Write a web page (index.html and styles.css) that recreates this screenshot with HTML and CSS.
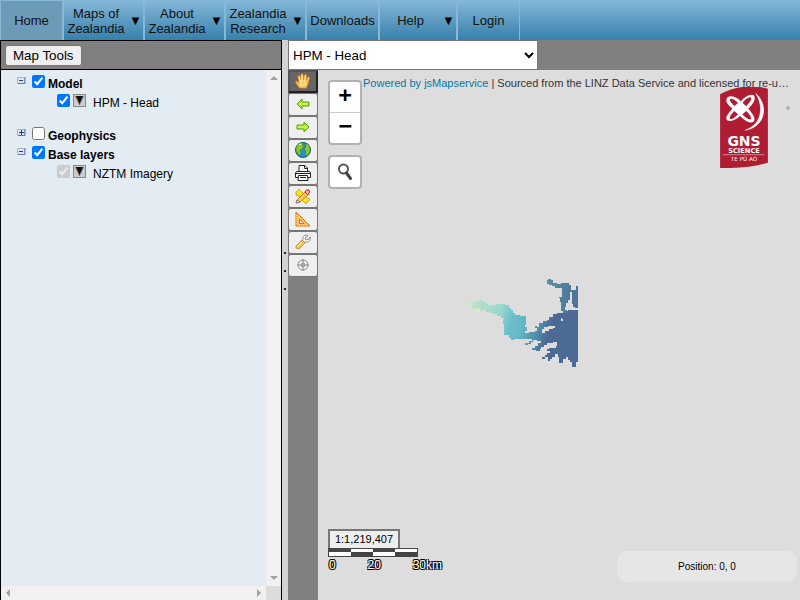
FILE: index.html
```html
<!DOCTYPE html>
<html lang="en">
<head>
<meta charset="utf-8">
<title>Groundwater map</title>
<link rel="stylesheet" href="styles.css">
</head>
<body>
<nav class="nav">
  <a class="item home" href="#"><span>Home</span></a>
  <a class="item menu" href="#"><span>Maps of Zealandia</span><i>▼</i></a>
  <a class="item menu" href="#"><span>About Zealandia</span><i>▼</i></a>
  <a class="item menu" href="#"><span>Zealandia Research</span><i>▼</i></a>
  <a class="item downloads" href="#"><span>Downloads</span></a>
  <a class="item help" href="#"><span>Help</span><i>▼</i></a>
  <a class="item login" href="#"><span>Login</span></a>
</nav>
<div class="workspace">
  <aside class="panel">
    <div class="panel-head"><button class="tools-button" type="button">Map Tools</button></div>
    <div class="scroller">
      <div class="tree">
        <div class="row">
          <svg class="toggle" viewBox="0 0 9 9"><path d="M.5 1.500h7v6h-7z" fill="#dde6f3" stroke="#a5b5cf"/><path d="M1 7.500h7V1" fill="none" stroke="#647aa3"/><path d="M2 4.500h4" stroke="#27406f"/></svg>
          <input type="checkbox" id="model" checked><label class="group" for="model">Model</label>
        </div>
        <div class="row leaf last">
          <input type="checkbox" id="head" checked>
          <button class="drop" type="button" aria-label="HPM - Head options"><svg viewBox="0 0 11 11"><path d="M1 1h9L5.500 10z" fill="#111"/><path d="M1.500 1l3.500 8" stroke="#bd8a52"/><path d="M9.500 1L6 9" stroke="#6a9cc8"/><path d="M3 1h5L5.500 8z" fill="#111"/></svg></button>
          <label for="head">HPM - Head</label>
        </div>
        <div class="row">
          <svg class="toggle" viewBox="0 0 9 9"><path d="M.5 1.500h7v6h-7z" fill="#dde6f3" stroke="#a5b5cf"/><path d="M1 7.500h7V1" fill="none" stroke="#647aa3"/><path d="M2 4.500h5M4.500 2v5" stroke="#27406f"/></svg>
          <input type="checkbox" id="geo"><label class="group" for="geo">Geophysics</label>
        </div>
        <div class="row">
          <svg class="toggle" viewBox="0 0 9 9"><path d="M.5 1.500h7v6h-7z" fill="#dde6f3" stroke="#a5b5cf"/><path d="M1 7.500h7V1" fill="none" stroke="#647aa3"/><path d="M2 4.500h4" stroke="#27406f"/></svg>
          <input type="checkbox" id="base" checked><label class="group" for="base">Base layers</label>
        </div>
        <div class="row leaf">
          <input type="checkbox" id="nztm" checked disabled>
          <button class="drop" type="button" aria-label="NZTM Imagery options"><svg viewBox="0 0 11 11"><path d="M1 1h9L5.500 10z" fill="#111"/><path d="M1.500 1l3.500 8" stroke="#bd8a52"/><path d="M9.500 1L6 9" stroke="#6a9cc8"/><path d="M3 1h5L5.500 8z" fill="#111"/></svg></button>
          <label for="nztm">NZTM Imagery</label>
        </div>
      </div>
      <div class="bar vertical">
        <svg viewBox="0 0 8 4"><path d="M0 4L4 0l4 4z"/></svg>
        <svg viewBox="0 0 8 4"><path d="M0 0l4 4 4-4z"/></svg>
      </div>
      <div class="bar horizontal">
        <svg viewBox="0 0 4 8"><path d="M4 0L0 4l4 4z"/></svg>
        <svg viewBox="0 0 4 8"><path d="M0 0l4 4-4 4z"/></svg>
      </div>
      <div class="corner"></div>
    </div>
  </aside>
  <div class="splitter"><span>.</span><span>.</span><span>.</span></div>
  <main class="viewer">
    <div class="select-bar">
      <select aria-label="Active layer"><option>HPM - Head</option></select>
    </div>
    <div class="stage">
      <div class="toolbar">
        <button class="tool active" type="button" aria-label="Pan">
          <svg viewBox="0 0 16 16"><path d="M4.500 15L1 10C0 8 1.500 7.500 3 9L4 10 3 4C2.700 2.300 4.600 2 5 3.600L6 7V1.800C6 .4 8 .4 8 1.800L8.500 7l1-4.800C9.800.9 11.600 1.200 11.400 2.600L11 7.500l1.700-3C13.400 3.300 15 4 14.500 5.300L12.500 12l-1.300 3z" fill="#fcc95c" stroke="#e68c1c" stroke-width=".8"/><path d="M4.300 4l1.500 6M7 2v7M10.400 3L9.500 9M5 12l6-1" stroke="#fff0bd" fill="none"/></svg>
        </button>
        <button class="tool" type="button" aria-label="Previous view">
          <svg viewBox="0 0 16 16"><path d="M2 8l5-5v3h7v4H7v3z" fill="#b9ee30" stroke="#5b9e12"/><path d="M4 8h9" stroke="#dcff6b"/></svg>
        </button>
        <button class="tool" type="button" aria-label="Next view">
          <svg viewBox="0 0 16 16"><path d="M14 8L9 3v3H2v4h7v3z" fill="#b9ee30" stroke="#5b9e12"/><path d="M3 8h9" stroke="#dcff6b"/></svg>
        </button>
        <button class="tool" type="button" aria-label="Full extent">
          <svg viewBox="0 0 16 16"><circle cx="8" cy="8" r="7.500" fill="#2390cf" stroke="#135985"/><path d="M1 6C2 2 5 1 8 1L7 3l2 1-2 3-2 1 1 3-1 3-4-5zM10 2l3 0 2 4v4l-3 4-2-2 1-3-2-2 2-2z" fill="#8dc72c" stroke="#347d2d" stroke-width=".6"/><path d="M4 2.500l3-.5" stroke="#f4f4b0"/></svg>
        </button>
        <button class="tool" type="button" aria-label="Print">
          <svg viewBox="0 0 16 16" fill="#fafafa" stroke="#222"><path d="M4 7V.5h6L12.500 3v4"/><path d="M9.500.5V3.500h3" fill="none"/><path d="M1.500 6.500h13L15.500 8v4.500H.5V8z"/><path d="M3.500 10.500h9l.5 5H3z"/><path d="M1 8.500h14M5 12.500h6" fill="none"/></svg>
        </button>
        <button class="tool" type="button" aria-label="Draw">
          <svg viewBox="0 0 16 16"><path d="M1 4l2-1 1-2 3 3 5 6 3 1-1 2-2 1-1 2-3-3-4-5-3-1z" fill="#ffe51e" stroke="#c69a00" stroke-width=".8"/><path d="M2 12l8-8 3 3-8 7-4 1z" fill="#f9c45b" stroke="#ba7b20" stroke-width=".8"/><path d="M10 4c1-3 5-3 4.500 0 0 1-1 2-1.500 3z" fill="#f5b0ab" stroke="#cf1b20"/><path d="M2 12l3 2-4 1z" fill="#eee" stroke="#666" stroke-width=".7"/></svg>
        </button>
        <button class="tool" type="button" aria-label="Measure">
          <svg viewBox="0 0 16 16"><path d="M1 1l14 14H1zM4.500 8v4.500H9z" fill="#f9bd5b" fill-rule="evenodd" stroke="#c9791b"/><path d="M2 4v10h11" fill="none" stroke="#ffe1a0" stroke-dasharray="1 1"/></svg>
        </button>
        <button class="tool" type="button" aria-label="Settings">
          <svg viewBox="0 0 16 16"><path d="M8 6C7 3 9 1 12 1l1 1-3 2 1 2 3-1 1-2c1 4-2 6-5 5L8 9 7 8z" fill="#f3f3f3" stroke="#777" stroke-width=".8"/><path d="M7 6l3 3-6 6-3-1V12z" fill="#fbc45b" stroke="#c68620" stroke-width=".8"/><path d="M7 8l-5 5" stroke="#ffeaad"/></svg>
        </button>
        <button class="tool" type="button" aria-label="Locate">
          <svg viewBox="0 0 16 16" fill="none" stroke="#8d8d8d"><circle cx="8" cy="8" r="5"/><circle cx="8" cy="8" r="2" stroke-width=".8"/><path d="M8 2v12M2 8h12"/></svg>
        </button>
      </div>
      <div class="map">
        <svg class="raster" viewBox="0 0 390 315" shape-rendering="crispEdges">
          <defs>
            <linearGradient id="depth" gradientUnits="userSpaceOnUse" x1="10" y1="90" x2="270" y2="180">
              <stop offset="0" stop-color="#d3edcf"/><stop offset=".2" stop-color="#b0ddcd"/><stop offset=".42" stop-color="#98d8cb"/><stop offset=".56" stop-color="#6dc0cb"/><stop offset=".7" stop-color="#64b8c4"/><stop offset=".87" stop-color="#528dad"/><stop offset="1" stop-color="#4b6b94"/>
            </linearGradient>
            <linearGradient id="north" x1="0" x2="1"><stop offset="0" stop-color="#568fa9"/><stop offset="1" stop-color="#4d7198"/></linearGradient>
          </defs>
          <path fill="url(#depth)" d="M10 102H20V99H34V92H42V90H45V94H60V91H70V95H78V103H86V109H94V106H108V103H134V106H147V113H153V120H160V128H166V134H180V138H197V165H194V172H200V182H194V190H206V186H226V182H232V175H226V167H232V172H238V160H250V154H262V150H268V142H280V132H290V129H308V124H325V121H354V277H348V291H336V277H330V271H324V262H318V268H308V279H298V262H294V253H285V260H276V266H270V272H264V262H256V268H247V262H254V256H261V249H270V243H262V237H268V233H288V228H292V215H278V219H262V226H252V232H244V236H240V242H228V239H217V234H226V228H235V219H244V213H230V210H220V216H212V221H204V224H195V219H206V213H216V207H162V209H153V205H147V194H132V163H130V148H132V144H123V137H112V132H100V129H91V125H78V120H66V126H39V122H48V113H36V108H30V106H26V113H22V108H10z"/>
          <path fill="#ddd" d="M246 184V178H252V172H264V167H285V173H278V178H266V184H254V190H246zM303 144h3v3h3v6h-6z"/>
          <path fill="url(#north)" d="M261 30H264V27H272V31H278V40H290V43H302V40H326V46H334V60H347V48H354V115H346V110H340V102H336V65H330V90H324V100H318V110H314V121H320V130H308V124H303V97H300V85H297V82H306V54H285V49H275V46H267V41H261z"/>
          <path fill="#d8edc0" d="M39 120h12v-6h9v6h3v5H39zM18 102h12v3H18z"/>
        </svg>
        <div class="control zoom">
          <button type="button" aria-label="Zoom in">+</button>
          <button type="button" aria-label="Zoom out">−</button>
        </div>
        <div class="control search">
          <button type="button" aria-label="Search"><svg viewBox="0 0 16 18"><circle cx="6.500" cy="6" r="4.500" fill="none" stroke="#555" stroke-width="2"/><path d="M9.500 10l4 5.500" stroke="#444" stroke-width="3" stroke-linecap="round"/></svg></button>
        </div>
        <div class="attribution"><a href="#">Powered by jsMapservice</a> | Sourced from the LINZ Data Service and licensed for re-u…</div>
        <svg class="logo" viewBox="60 50 144 244">
          <path d="M60 72Q125 36 204 55V278Q145 296 60 294z" fill="#b01c32"/>
          <path d="M79 88C83 66 120 84 122 94C135 76 162 66 164 80C167 94 151 108 145 115C158 131 169 146 161 154C148 164 126 143 120 137C105 151 86 157 80 149C74 139 91 123 97 115C86 106 77 97 79 88zM89 88C89 94 98 102 103 107L114 98C105 88 92 82 89 88zM128 98L139 108C147 99 157 88 153 82C148 78 135 88 128 98zM103 122C93 132 85 142 91 146C97 149 108 138 114 132zM139 122L127 132C135 141 147 150 152 147C157 142 147 130 139 122z" fill="#fff" fill-rule="evenodd"/>
          <path d="M168 70C205 102 199 170 136 180C184 164 194 112 168 70z" fill="#fff" stroke="#fff" stroke-width="2"/>
          <g fill="#fff" text-anchor="middle"><text class="gns" x="132" y="227">GNS</text><text class="science" x="132" y="248">SCIENCE</text><text class="maori" x="132" y="272">TE PŪ AO</text></g>
          <path d="M69 254h125" stroke="#e8bcc3" stroke-width="2"/>
        </svg>
        <span class="dot"></span>
        <div class="scale">
          <div class="ratio">1:1,219,407</div>
          <div class="ruler"><i></i><i></i><i></i><i></i></div>
          <div class="marks"><span>0</span><span>20</span><span>30km</span></div>
        </div>
        <div class="position">Position: 0, 0</div>
      </div>
    </div>
  </main>
</div>
</body>
</html>
```
FILE: styles.css
```css
* { box-sizing: border-box; }
body {
  margin: 0;
  height: 100vh;
  display: flex;
  flex-direction: column;
  overflow: hidden;
  background: #ddd;
  color: #000;
  font-family: "Liberation Sans", Arial, sans-serif;
  font-size: 12px;
}
svg { display: block; }
button { font-family: inherit; color: #000; }

.nav {
  display: flex;
  flex: 0 0 40px;
  background: linear-gradient(#86b8d8, #3680ab);
}
.item {
  display: flex;
  align-items: center;
  width: 81px;
  border: 1px solid #86b8d8;
  border-width: 1px 1px 0;
  color: #111;
  font-size: 13px;
  line-height: 15px;
  text-align: center;
  text-decoration: none;
}
.item span { flex: 1; }
.item i { width: 15px; font-style: normal; text-align: center; color: #000; }
.home { width: 63px; background: #6b9bb6; }
.downloads { width: 73px; }
.help { width: 78px; }
.login { width: 63px; }

.workspace { display: flex; flex: 1; min-height: 0; }
.panel {
  display: flex;
  flex-direction: column;
  width: 282px;
  border: solid #000;
  border-width: 1px 1px 0;
}
.panel-head {
  display: flex;
  align-items: center;
  height: 29px;
  padding-left: 4px;
  background: #808080;
  border-bottom: 1px solid #000;
}
.tools-button {
  height: 21px;
  padding: 0 7px;
  border: 1px solid #767676;
  border-radius: 3px;
  background: #efefef;
}
.scroller {
  flex: 1;
  display: grid;
  grid-template: 1fr 14px / 1fr 15px;
  background: #e4ecf3;
}
.tree { padding: 5px 0 0 16px; }
.row { display: flex; align-items: flex-start; height: 19px; }
.row input { width: 13px; height: 13px; margin: 0 3px 0 0; }
.row label { padding-top: 1px; line-height: 16px; }
.row .group { font-weight: bold; }
.toggle { width: 9px; height: 9px; margin-right: 6px; margin-top: 1px; }
.leaf { padding-left: 40px; }
.last { height: 33px; }
.drop {
  width: 13px;
  height: 13px;
  margin-right: 7px;
  padding: 0;
  border: 1px solid #888;
  background: #ccc;
}
.drop svg { width: 11px; height: 11px; }
.bar { display: flex; align-items: center; justify-content: space-between; background: #f1f1f1; fill: #a3a3a3; }
.vertical { flex-direction: column; padding: 6px 0; }
.vertical svg { width: 8px; height: 4px; }
.horizontal { padding: 0 5px; }
.horizontal svg { width: 4px; height: 8px; }
.corner { background: #dcdcdc; }

.splitter {
  display: flex;
  flex-direction: column;
  align-items: center;
  justify-content: center;
  width: 6px;
  padding-bottom: 104px;
  background: #d3d3d3;
  font-weight: bold;
  line-height: 18px;
}

.viewer { display: flex; flex: 1; flex-direction: column; min-width: 0; }
.select-bar { display: flex; height: 30px; background: #808080; }
.select-bar select {
  width: 250px;
  height: 30px;
  border: 1px solid #767676;
  border-radius: 0;
  background-color: #fff;
  color: #000;
  font-family: inherit;
}
.stage { display: flex; flex: 1; }
.toolbar { display: flex; flex-direction: column; width: 30px; background: #808080; }
.tool {
  display: flex;
  align-items: center;
  justify-content: center;
  height: 23px;
  padding: 0 0 2px;
  border: 1px solid #767676;
  border-radius: 3px;
  background: #efefef;
}
.tool svg { width: 16px; height: 16px; }
.active { border: 2px solid #333; border-color: #555 #222 #222 #555; border-radius: 0; background: #666; }

.map { position: relative; flex: 1; overflow: hidden; background: #ddd; }
.raster { position: absolute; left: 142px; top: 200px; width: 130px; height: 105px; }
.control {
  position: absolute;
  left: 10px;
  width: 34px;
  border: 2px solid #b1b1b1;
  border-radius: 4px;
  background: #fff;
}
.control button {
  display: flex;
  justify-content: center;
  align-items: center;
  width: 30px;
  height: 30px;
  padding: 0;
  border: 0;
  background: none;
  font: bold 22px/26px "DejaVu Sans Mono", monospace;
}
.zoom { top: 10px; }
.zoom button { padding-bottom: 4px; }
.zoom button:first-child { height: 31px; border-bottom: 1px solid #ccc; }
.search { top: 85px; }
.search svg { width: 16px; height: 18px; }
.attribution {
  position: absolute;
  left: 45px;
  right: 8px;
  top: 5px;
  color: #333;
  font-size: 11px;
  line-height: 16px;
  white-space: nowrap;
}
.attribution a { color: #0078a8; text-decoration: none; }
.logo { position: absolute; right: 32px; top: 17px; width: 48px; height: 81px; }
.gns { font: bold 42px "DejaVu Sans", sans-serif; }
.science { font: bold 20px "DejaVu Sans", sans-serif; }
.maori { font: 17px "DejaVu Sans", sans-serif; }
.dot { position: absolute; right: 10px; top: 36px; width: 4px; height: 4px; border-radius: 50%; background: #b3b3b3; }
.scale { position: absolute; left: 10px; bottom: 26px; width: 114px; }
.ratio {
  width: 72px;
  height: 19px;
  border: 2px solid #777;
  border-bottom: 0;
  background: #eee;
  font-size: 11px;
  line-height: 17px;
  text-align: center;
}
.ruler { display: flex; width: 90px; height: 9px; border: 1px solid #444; }
.ruler i { flex: 1; background: linear-gradient(#444 50%, #fff 50%); }
.ruler i:nth-child(even) { background: linear-gradient(#fff 50%, #444 50%); }
.marks {
  display: flex;
  justify-content: space-between;
  padding-left: 1px;
  color: #fff;
  line-height: 17px;
  text-shadow: 1px 1px #000, -1px 1px #000, 1px -1px #000, -1px -1px #000;
}
.position {
  position: absolute;
  right: 3px;
  bottom: 18px;
  width: 180px;
  border-radius: 10px;
  background: #e6e6e6;
  font-size: 10px;
  line-height: 31px;
  text-align: center;
}
```
